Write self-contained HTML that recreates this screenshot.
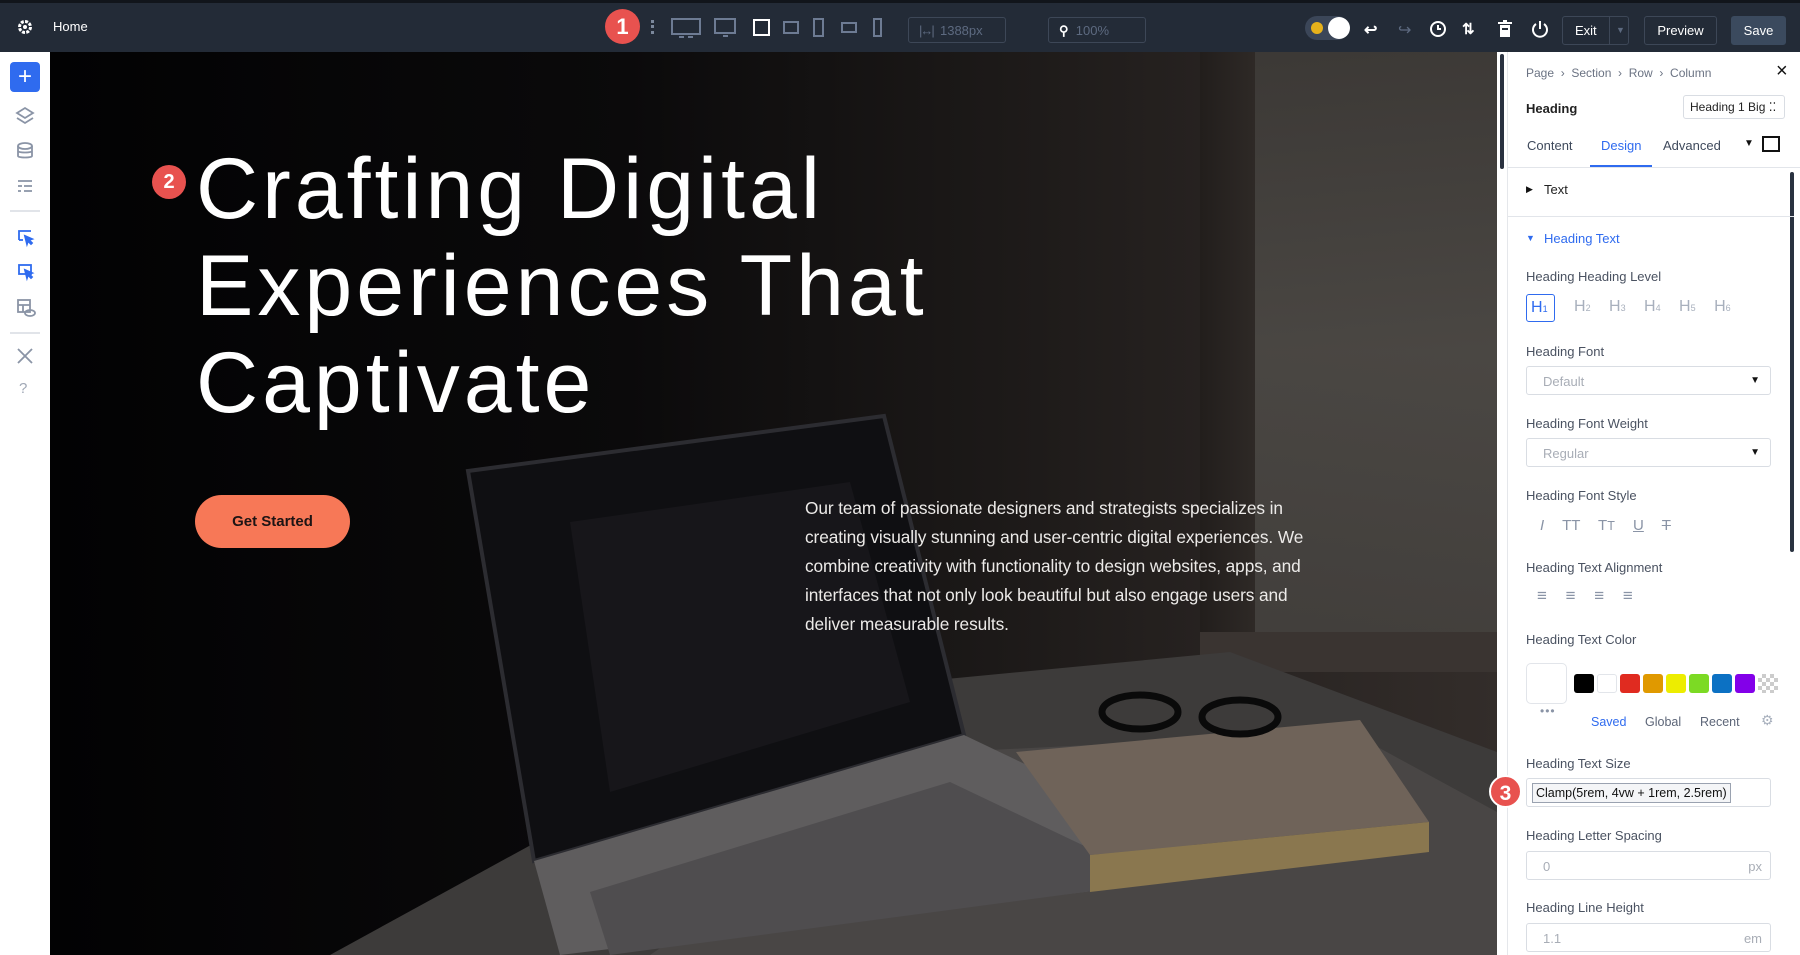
<!DOCTYPE html>
<html><head><meta charset="utf-8"><style>
*{box-sizing:border-box;margin:0;padding:0}
body{width:1800px;height:955px;overflow:hidden;font-family:"Liberation Sans",sans-serif;position:relative;background:#000}
.abs{position:absolute}
#top{left:0;top:0;width:1800px;height:52px;background:#232b37;border-top:3px solid #11151b}
#side{left:0;top:52px;width:50px;height:903px;background:#fff}
#hero{left:50px;top:52px;width:1447px;height:903px;overflow:hidden;background:linear-gradient(90deg,#020203 0%,#0b0a0b 40%,#1c1918 65%,#2a2523 85%,#332d2a 100%)}
#panel{left:1497px;top:52px;width:303px;height:903px;background:#fff}
.lbl{position:absolute;left:29px;font-size:13px;color:#4a5261}
.sel{position:absolute;left:29px;width:245px;height:29px;border:1px solid #d9dde3;border-radius:3px;font-size:13px;color:#a8adb6;padding:7px 16px}
.tb{position:absolute;top:14px;height:26px;border:1px solid #3d4757;border-radius:3px;color:#5d6a80;font-size:13px;padding:5px 10px}
.btn{position:absolute;top:13px;height:29px;border:1px solid #3d4757;border-radius:3px;color:#fff;font-size:13px;text-align:center;line-height:27px}
.ico{position:absolute;top:17px}
.badge{position:absolute;border-radius:50%;background:#e8524f;color:#fff;font-weight:bold;text-align:center}
.sw{position:absolute;top:622px;width:20px;height:19px;border-radius:3px}
p.t{position:absolute;left:805px;font-size:17.3px;color:#eceae8;white-space:nowrap;letter-spacing:-0.1px}
</style></head><body>

<div id="hero" class="abs">
  <div class="abs" style="left:1201px;top:0;width:246px;height:600px;background:linear-gradient(180deg,#3e3b38,#4d4a46 50%,#44413e);opacity:.9"></div>
  <div class="abs" style="left:1150px;top:0;width:55px;height:620px;background:linear-gradient(90deg,#221e1c,#2e2926)"></div>
  <div class="abs" style="left:1150px;top:580px;width:297px;height:40px;background:#3a3431"></div>
  <svg class="abs" style="left:0;top:0" width="1447" height="903">
    <polygon points="280,903 760,640 1180,600 1447,700 1447,903" fill="#3d3b3a"/>
    <polygon points="600,903 900,700 1300,680 1447,760 1447,903" fill="#4e4c4a" opacity=".7"/>
    <polygon points="418,419 834,364 914,683 484,809" fill="#0f0f12" stroke="#2c2c31" stroke-width="4"/>
    <polygon points="520,470 800,430 860,650 560,740" fill="#17161a"/>
    <polygon points="484,809 914,683 1201,820 510,903" fill="#5f5d5e"/>
    <polygon points="540,840 900,730 1110,830 560,903" fill="#4f4d4f"/>
    <polygon points="966,700 1310,668 1379,770 1040,803" fill="#6f6359"/>
    <polygon points="1040,803 1379,770 1379,800 1040,840" fill="#8a774f"/>
    <ellipse cx="1090" cy="660" rx="38" ry="17" fill="none" stroke="#0a0a0a" stroke-width="7"/>
    <ellipse cx="1190" cy="665" rx="38" ry="17" fill="none" stroke="#0a0a0a" stroke-width="7"/>
  </svg>
  <div class="abs" style="left:146px;top:89px;font-size:86px;line-height:97px;color:#fff;letter-spacing:4px">Crafting Digital<br>Experiences That<br>Captivate</div>
  <div class="badge" style="left:102px;top:113px;width:34px;height:34px;font-size:20px;line-height:34px">2</div>
  <div class="abs" style="left:145px;top:443px;width:155px;height:53px;border-radius:27px;background:#f77857;color:#1d1414;font-weight:bold;font-size:15px;text-align:center;line-height:53px">Get Started</div>
</div>
<p class="t" style="top:498px">Our team of passionate designers and strategists specializes in</p>
<p class="t" style="top:527px">creating visually stunning and user-centric digital experiences. We</p>
<p class="t" style="top:556px">combine creativity with functionality to design websites, apps, and</p>
<p class="t" style="top:585px">interfaces that not only look beautiful but also engage users and</p>
<p class="t" style="top:614px">deliver measurable results.</p>

<div id="top" class="abs">
  <svg class="abs" style="left:16px;top:15px" width="18" height="18" viewBox="0 0 18 18"><circle cx="9" cy="9" r="5.5" fill="none" stroke="#fff" stroke-width="3" stroke-dasharray="3 1.3"/><circle cx="9" cy="9" r="2" fill="#fff"/></svg>
  <div class="abs" style="left:53px;top:16px;color:#fff;font-size:13px">Home</div>
  <div class="badge" style="left:605px;top:6px;width:35px;height:35px;font-size:22px;line-height:35px">1</div>
  <div class="abs" style="left:651px;top:17px;width:3px;height:14px;border-left:3px dotted #7b889c"></div>
  <svg class="abs" style="left:670px;top:14px" width="220" height="22">
    <g fill="none" stroke="#6d7b93" stroke-width="2">
      <rect x="2" y="2" width="28" height="15"/><rect x="45" y="2" width="20" height="14"/>
      <rect x="84" y="3" width="15" height="15" stroke="#fff"/><rect x="114" y="5" width="14" height="11"/>
      <rect x="144" y="2" width="9" height="17"/><rect x="172" y="6" width="14" height="9"/><rect x="204" y="2" width="7" height="17"/>
    </g>
    <g fill="#6d7b93"><rect x="9" y="19" width="5" height="2"/><rect x="18" y="19" width="5" height="2"/><rect x="53" y="18" width="5" height="2"/></g>
  </svg>
  <div class="tb" style="left:908px;width:98px"><span style="letter-spacing:-2px">|↔|</span>&nbsp; 1388px</div>
  <div class="tb" style="left:1048px;width:98px;padding-left:10px"><b style="color:#fff">⚲</b>&nbsp; 100%</div>
  <div class="abs" style="left:1305px;top:13px;width:44px;height:24px;border-radius:12px;background:#3b4658"></div>
  <div class="abs" style="left:1311px;top:19px;width:12px;height:12px;border-radius:50%;background:#e7b21b"></div>
  <div class="abs" style="left:1328px;top:14px;width:22px;height:22px;border-radius:50%;background:#fff"></div>
  <div class="ico" style="left:1364px;color:#fff;font-size:16px;font-weight:bold">↩</div>
  <div class="ico" style="left:1398px;color:#5d6a80;font-size:16px">↪</div>
  <svg class="abs" style="left:1429px;top:17px" width="18" height="18"><circle cx="9" cy="9" r="7" fill="none" stroke="#fff" stroke-width="2"/><path d="M9 5v4h3" stroke="#fff" stroke-width="2" fill="none"/></svg>
  <div class="ico" style="left:1462px;color:#fff;font-size:15px;font-weight:bold">⇅</div>
  <svg class="abs" style="left:1497px;top:17px" width="16" height="18"><rect x="3" y="5" width="10" height="12" fill="#fff"/><rect x="1" y="2" width="14" height="2" fill="#fff"/><rect x="6" y="0" width="4" height="2" fill="#fff"/><rect x="5" y="8" width="6" height="2" fill="#232b37"/></svg>
  <svg class="abs" style="left:1531px;top:17px" width="18" height="18"><path d="M5 4a7 7 0 1 0 8 0" fill="none" stroke="#fff" stroke-width="2"/><path d="M9 1v8" stroke="#fff" stroke-width="2"/></svg>
  <div class="btn" style="left:1562px;width:67px;text-align:left;padding-left:12px">Exit<span style="position:absolute;left:46px;top:0;height:27px;border-left:1px solid #3d4757;padding-left:6px;color:#5d6a80;font-size:9px">▼</span></div>
  <div class="btn" style="left:1644px;width:73px">Preview</div>
  <div class="btn" style="left:1731px;width:55px;background:#3b4a5e;border-color:#3b4a5e">Save</div>
</div>

<div id="side" class="abs">
  <div class="abs" style="left:10px;top:10px;width:30px;height:30px;border-radius:4px;background:#2f6bef;color:#fff;font-size:24px;text-align:center;line-height:29px">+</div>
  <svg class="abs" style="left:0;top:0" width="50" height="360" fill="none" stroke="#8a94a6" stroke-width="1.8">
    <path d="M17 61l8-5 8 5-8 5z M17 66l8 5 8-5"/>
    <g transform="translate(0,4)"><ellipse cx="25" cy="90" rx="7" ry="3"/><path d="M18 90v10c0 2 14 2 14 0V90 M18 95c0 2 14 2 14 0"/></g>
    <path transform="translate(0,5)" d="M18 124h14 M18 129h4 M24 129h8 M18 134h3 M24 134h8"/>
    <path d="M10 159h30 M10 281h30" stroke="#dde0e6"/>
    <g stroke="#2f6bef" transform="translate(0,10)"><path d="M19 178v-9h12 M19 178h4"/><path d="M25 174l7 3-3 1 3 3-1 1-3-3-1 3z" fill="#2f6bef"/>
    <rect x="19" y="203" width="12" height="9"/><path d="M25 208l7 3-3 1 3 3-1 1-3-3-1 3z" fill="#2f6bef"/></g>
    <g transform="translate(0,10)"><rect x="18" y="238" width="12" height="12"/><path d="M18 243h12 M23 243v7"/><ellipse cx="30" cy="251" rx="5" ry="3"/></g>
    <path d="M18 297l14 14 M32 297l-14 14"/>
  </svg>
  <div class="abs" style="left:19px;top:328px;color:#a0a8b6;font-size:15px">?</div>
</div>

<div id="panel" class="abs">
  <div class="abs" style="left:3px;top:2px;width:4px;height:115px;background:#2a3240;border-radius:2px"></div>
  <div class="abs" style="left:10px;top:0;width:1px;height:903px;background:#e5e7eb"></div>
  <div class="abs" style="left:293px;top:120px;width:4px;height:380px;background:#2a3240;border-radius:2px"></div>
  <div class="abs" style="left:29px;top:14px;font-size:12px;color:#6b7383">Page &nbsp;›&nbsp; Section &nbsp;›&nbsp; Row &nbsp;›&nbsp; Column</div>
  <div class="abs" style="left:279px;top:8px;font-size:20px;color:#111">×</div>
  <div class="abs" style="left:29px;top:49px;font-size:13px;font-weight:bold;color:#222">Heading</div>
  <div class="abs" style="left:186px;top:43px;width:102px;height:24px;border:1px solid #d9dde3;border-radius:3px;font-size:12px;color:#222;padding:4px 6px">Heading 1 Big ⁚⁚</div>
  <div class="abs" style="left:30px;top:86px;font-size:13px;color:#3f4a5c">Content</div>
  <div class="abs" style="left:104px;top:86px;font-size:13px;color:#2f6bef">Design</div>
  <div class="abs" style="left:93px;top:113px;width:62px;height:2px;background:#2f6bef"></div>
  <div class="abs" style="left:166px;top:86px;font-size:13px;color:#3f4a5c">Advanced</div>
  <div class="abs" style="left:247px;top:86px;font-size:10px;color:#111">▼</div>
  <div class="abs" style="left:265px;top:84px;width:18px;height:16px;border:2px solid #111"></div>
  <div class="abs" style="left:11px;top:115px;width:292px;height:1px;background:#e2e5ea"></div>
  <div class="abs" style="left:29px;top:132px;font-size:9px;color:#111">▶</div>
  <div class="abs" style="left:47px;top:130px;font-size:13px;color:#222">Text</div>
  <div class="abs" style="left:11px;top:164px;width:286px;height:1px;background:#e2e5ea"></div>
  <div class="abs" style="left:29px;top:181px;font-size:9px;color:#2f6bef">▼</div>
  <div class="abs" style="left:47px;top:179px;font-size:13px;color:#2f6bef">Heading Text</div>
  <div class="lbl" style="top:217px">Heading Heading Level</div>
  <div class="abs" style="left:29px;top:242px;width:29px;height:28px;border:1.5px solid #2f6bef;border-radius:3px;color:#2f6bef;font-size:16px;padding:4px 4px">H<small style="font-size:9px">1</small></div>
  <div class="abs" style="left:77px;top:246px;font-size:16px;color:#a8b0bd;word-spacing:14px">H<small style="font-size:9px">2</small> H<small style="font-size:9px">3</small> H<small style="font-size:9px">4</small> H<small style="font-size:9px">5</small> H<small style="font-size:9px">6</small></div>
  <div class="lbl" style="top:292px">Heading Font</div>
  <div class="sel" style="top:314px">Default<span style="position:absolute;right:10px;top:8px;font-size:10px;color:#111">▼</span></div>
  <div class="lbl" style="top:364px">Heading Font Weight</div>
  <div class="sel" style="top:386px">Regular<span style="position:absolute;right:10px;top:8px;font-size:10px;color:#111">▼</span></div>
  <div class="lbl" style="top:436px">Heading Font Style</div>
  <div class="abs" style="left:43px;top:465px;font-size:15px;color:#8a94a6;word-spacing:14px"><i>I</i> TT T<small>T</small> <u>U</u> <s>T</s></div>
  <div class="lbl" style="top:508px">Heading Text Alignment</div>
  <div class="abs" style="left:40px;top:534px;font-size:17px;color:#8a94a6;word-spacing:14px;letter-spacing:0">≡ ≡ ≡ ≡</div>
  <div class="lbl" style="top:580px">Heading Text Color</div>
  <div class="abs" style="left:29px;top:611px;width:41px;height:41px;border:1px solid #e2e5ea;border-radius:5px;background:#fff"></div>
  <div class="abs" style="left:43px;top:652px;font-size:12px;color:#8a94a6;letter-spacing:1px">•••</div>
  <div class="sw" style="left:77px;background:#000"></div>
  <div class="sw" style="left:100px;background:#fff;border:1px solid #e2e5ea"></div>
  <div class="sw" style="left:123px;background:#e02b20"></div>
  <div class="sw" style="left:146px;background:#e09900"></div>
  <div class="sw" style="left:169px;background:#eded00"></div>
  <div class="sw" style="left:192px;background:#7cda24"></div>
  <div class="sw" style="left:215px;background:#0c71c3"></div>
  <div class="sw" style="left:238px;background:#8300e9"></div>
  <div class="sw" style="left:261px;background:repeating-conic-gradient(#ccc 0 25%,#fff 0 50%) 0 0/8px 8px"></div>
  <div class="abs" style="left:94px;top:663px;font-size:12.5px;color:#2f6bef">Saved</div>
  <div class="abs" style="left:148px;top:663px;font-size:12.5px;color:#5d6678">Global</div>
  <div class="abs" style="left:203px;top:663px;font-size:12.5px;color:#5d6678">Recent</div>
  <div class="abs" style="left:264px;top:660px;font-size:14px;color:#a8b0bd">⚙</div>
  <div class="lbl" style="top:704px">Heading Text Size</div>
  <div class="sel" style="top:726px;padding:4px 5px"><span style="display:inline-block;border:1px solid #9aa2b0;background:#f4f5f7;color:#111;font-size:12.5px;padding:2px 3px">Clamp(5rem, 4vw + 1rem, 2.5rem)</span></div>
  <div class="badge" style="left:-8px;top:723px;width:33px;height:33px;font-size:21px;line-height:33px;border:2px solid #fff">3</div>
  <div class="lbl" style="top:776px">Heading Letter Spacing</div>
  <div class="sel" style="top:799px">0<span style="position:absolute;right:8px;top:7px">px</span></div>
  <div class="lbl" style="top:848px">Heading Line Height</div>
  <div class="sel" style="top:871px">1.1<span style="position:absolute;right:8px;top:7px">em</span></div>
</div>
</body></html>
